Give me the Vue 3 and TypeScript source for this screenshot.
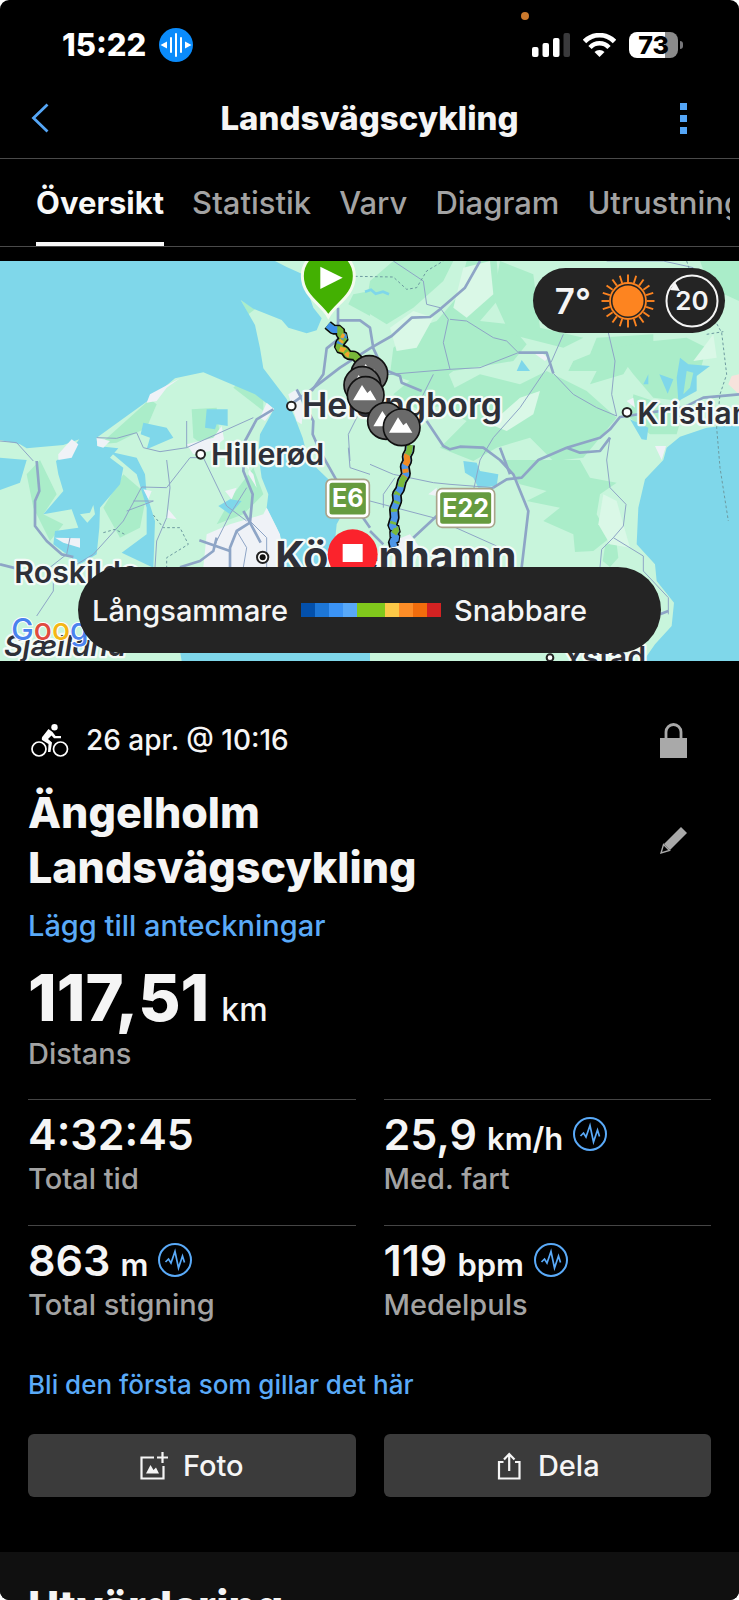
<script setup lang="ts">
import { ref } from 'vue'

interface Metric {
  value: string
  unit: string
  label: string
  chart: boolean
}

const tabs: string[] = ['Översikt', 'Statistik', 'Varv', 'Diagram', 'Utrustning']
const activeTab = ref<string>('Översikt')

const metrics: Metric[] = [
  { value: '4:32:45', unit: '', label: 'Total tid', chart: false },
  { value: '25,9', unit: 'km/h', label: 'Med. fart', chart: true },
  { value: '863', unit: 'm', label: 'Total stigning', chart: true },
  { value: '119', unit: 'bpm', label: 'Medelpuls', chart: true },
]

const climbs: [number, number][] = [
  [1108, 339],
  [1087, 372],
  [1097, 402],
  [1158, 480],
  [1205, 499],
]

const sunRays: number[] = Array.from({ length: 20 }, (_, i) => i * 18)
const northTrack = 'M983 192L1000 206L1020 206L1022 222L1034 228L1020 246L1016 262L1034 268L1044 282L1064 284L1078 298'
const southTrack = 'M1230 552L1228 570L1220 585L1222 600L1214 615L1218 640L1206 660L1200 685L1190 700L1192 720L1182 745L1184 770L1176 797L1190 805L1180 820L1190 832L1178 840L1182 857'
</script>

<template>
  <main class="screen">
    <div class="status">
      <span class="mic-dot"></span>
      <div class="status-left">
        <span class="clock">15:22</span>
        <svg class="voice" viewBox="0 0 34 34" aria-hidden="true">
          <circle cx="17" cy="17" r="17" fill="#0a8bfb" />
          <path d="M17 6V28M12 10V24M22 10V24" stroke="#fff" stroke-width="2" stroke-linecap="round" />
          <path d="M1.500 17L8 13.500V20.500ZM32.500 17L26 13.500V20.500Z" fill="#fff" />
        </svg>
      </div>
      <div class="status-right">
        <svg class="signal" viewBox="0 0 38 24" aria-hidden="true">
          <rect x="0" y="14" width="6.500" height="10" rx="2" fill="#fff" />
          <rect x="10.500" y="10" width="6.500" height="14" rx="2" fill="#fff" />
          <rect x="21" y="5" width="6.500" height="19" rx="2" fill="#fff" />
          <rect x="31.500" y="0" width="6.500" height="24" rx="2" fill="#3a3a3c" />
        </svg>
        <svg class="wifi" viewBox="0 0 33 24" aria-hidden="true">
          <path d="M1.500 8.500A21 21 0 0 1 31.500 8.500" fill="none" stroke="#fff" stroke-width="4.800" />
          <path d="M7 14.500A13 13 0 0 1 26 14.500" fill="none" stroke="#fff" stroke-width="4.500" />
          <path d="M11.500 19A7 7 0 0 1 21.500 19L16.500 24Z" fill="#fff" />
        </svg>
        <div class="battery"><span>73</span></div>
      </div>
    </div>

    <header class="nav">
      <button class="icon-button" type="button" aria-label="Tillbaka">
        <svg class="back" viewBox="0 0 18 30" aria-hidden="true">
          <path d="M16.500 1.500L2.500 15L16.500 28.500" fill="none" stroke="#55a6f6" stroke-width="2.800" />
        </svg>
      </button>
      <h1>Landsvägscykling</h1>
      <button class="icon-button end" type="button" aria-label="Mer">
        <svg class="more" viewBox="0 0 7 31" aria-hidden="true">
          <path d="M0 0H7V7H0ZM0 12H7V19H0ZM0 24H7V31H0Z" fill="#55a6f6" />
        </svg>
      </button>
    </header>

    <nav class="tabs">
      <div class="tab-strip">
        <button
          v-for="tab in tabs"
          :key="tab"
          type="button"
          class="tab"
          :class="{ active: tab === activeTab }"
          @click="activeTab = tab"
        >{{ tab }}</button>
      </div>
    </nav>

    <section class="map">
      <svg class="map-canvas" viewBox="0 0 2217 1200" preserveAspectRatio="xMidYMid slice" aria-hidden="true">
        <rect width="2217" height="1200" fill="#c8f5dc" />

        <g fill="#aaedc9">
          <path d="M1180 0L1110 60L1095 150L1160 190L1240 140L1330 60L1360 0Z" />
          <path d="M1250 200L1310 180L1370 110L1400 0L1490 0L1500 110L1440 180L1530 190L1580 250L1540 300L1360 330L1290 380L1170 340L1180 260Z" />
          <path d="M1500 0L1600 40L1620 200L1750 230L1690 260L1530 220L1480 110Z" />
          <path d="M1440 340L1560 370L1640 330L1760 390L1850 470L1750 590L1660 600L1590 530L1490 560L1420 600L1320 560L1400 480L1290 420Z" />
          <path d="M1790 230L1770 280L1720 300L1705 330L1790 330L1770 370L1870 340L1900 290L1960 280L1960 220Z" />
          <path d="M1840 260L1960 240L2060 230L2120 260L2100 330L2040 420L1960 410L1900 340Z" />
          <path d="M2100 0L2217 0L2217 120L2130 80Z" />
          <path d="M1900 400L2050 450L2030 520L1950 520L1890 470Z" />
          <path d="M1500 597L1740 597L1770 650L1850 665L1800 700L1790 760L1830 830L1780 870L1725 873L1720 820L1630 780L1680 740L1580 720L1640 690L1560 670Z" />
          <path d="M1816 850L1850 850L1855 890L1830 918L1808 900Z" />
          <path d="M1330 300L1380 420L1260 450L1180 400L1240 350Z" />
          <path d="M1060 100L1110 90L1110 165L1045 130Z" />
          <path d="M450 415L470 430L440 500L350 545L300 550Z" />
          <path d="M575 445L650 440L660 530L620 560L580 530Z" />
          <path d="M730 350L790 400L790 450L700 380Z" />
          <path d="M722 117L765 145L745 160Z" />
          <path d="M120 597L170 700L130 760L190 790L150 840L100 740L80 640Z" />
          <path d="M370 640L440 700L420 800L360 830L310 740Z" />
          <path d="M760 620L790 700L730 760L650 790L700 700Z" />
        </g>
        <g fill="#daf8e7">
          <path d="M1170 200L1240 150L1300 170L1250 260L1190 270Z" />
          <path d="M1390 20L1470 0L1480 100L1400 170L1360 140Z" />
          <path d="M1560 410L1620 390L1600 460L1520 510L1470 490Z" />
          <path d="M1610 60L1640 140L1720 200L1640 180Z" />
          <path d="M2080 300L2140 220L2150 290Z" />
          <path d="M1810 700L1850 720L1890 860L1830 850L1795 790Z" />
        </g>

        <g fill="#7fd7ea">
          <path d="M0 0H825L860 18L905 38L940 140L965 172L950 208L920 217L865 200L845 177L760 143L722 117L765 192L780 262L790 322L860 414L885 470L908 530L925 597L985 655L1035 745L1010 790L1005 840L1110 920V1200H545L540 1170L820 1000L850 850L830 800L800 740L805 700L785 650L775 580L780 520L822 444L765 400L700 372L610 334L525 352L450 415L290 530L292 555L355 562L330 590L370 620L360 670L300 740L298 800L290 880L240 910L160 850L165 810L235 800L215 745L130 760L190 690L175 640L168 600L215 565L238 535L190 552L80 562L60 550L0 537Z" />
          <path d="M330 572L410 590L435 640L440 700L465 780L460 920L365 875L440 820L440 740L410 640Z" />
          <path d="M430 485L500 500L520 530L440 565L450 530L422 520Z" />
          <path d="M620 445L683 445L683 495L650 490L645 505L615 500Z" />
          <path d="M0 590L80 597L60 665L0 687Z" />
          <path d="M655 735L690 715L725 720L690 760Z" />
          <path d="M2217 490L2120 500L2040 527L2000 560L1990 597L1935 655L1915 740L1910 850L1965 910L1970 960L2022 1025L2015 1095L1965 1150L1930 1200H2217Z" />
          <path d="M1550 330L1565 297L1590 330ZM1390 600L1430 605L1440 630L1495 640L1490 675L1435 680L1420 650L1395 635ZM1890 475L1945 500L1940 537L1925 535ZM1930 370L1945 340V370ZM1978 340L2020 355L2003 398ZM2040 290L2065 310L2130 315L2090 345L2090 390L2035 420L2030 350Z" />
          <path d="M2060 330L2080 335L2070 380L2050 400Z" fill="#aaedc9" />
        </g>
        <path d="M1095 92l18 -6l14 12l22 -6l18 8" fill="none" stroke="#7fd7ea" stroke-width="8" />

        <g fill="#c8f5dc">
          <path d="M240 760L270 755L280 732L285 760L262 785Z" />
        </g>
        <g fill="#eff2f7">
          <path d="M450 400L540 352L500 380L470 420L440 425Z" />
          <path d="M175 580L215 535L235 550L215 590L175 597Z" />
          <path d="M290 530L330 540L310 560L292 555Z" />
          <path d="M780 470L800 425L822 444L795 480Z" />
          <path d="M865 400L890 385L910 440L905 490L890 480Z" />
          <path d="M560 550L640 530L665 495L672 535L630 570L580 580Z" />
          <path d="M620 820L690 790L790 760L800 740L840 820L850 919H610Z" />
          <path d="M675 690L710 680L695 715ZM430 685L455 690L445 715ZM505 745L530 775L500 770ZM165 830L240 832L240 860L190 845Z" />
          <path d="M720 597L750 597L745 640L770 680L760 640Z" />
          <path d="M1180 840L1230 820L1260 860L1240 919H1175Z" />
          <path d="M1620 272L1645 290L1635 300L1600 275ZM1285 700L1310 680L1310 705ZM1965 555L1998 555L1985 597ZM1880 420L1900 410L1905 440Z" />
          <path d="M2195 345L2217 340V400L2185 370Z" fill="#f7e2dc" />
        </g>

        <g class="road major">
          <path d="M1440 0L1395 80L1320 145L1290 168L1235 170L1175 225L1110 262L1020 320L935 385L880 425" />
          <path d="M1014 140V235L980 262L970 340L935 390" />
          <path d="M1014 178L1080 178L1110 200L1120 262L1150 325L1200 345L1205 365L1265 390" />
          <path d="M890 385L940 480L938 520L960 570L1005 650L1110 800" />
          <path d="M820 445L770 475L735 540L730 630L758 700L750 785L710 810L690 860V919" />
          <path d="M730 750L750 785L782 845M598 838L690 870M650 830L640 870L600 900L540 919" />
          <path d="M110 600L118 690L105 720L105 795L140 840L185 880L220 888" />
          <path d="M1555 275H1640L1660 337" />
          <path d="M1280 480L1330 555L1350 565L1380 557L1450 560L1500 597L1540 640L1585 750L1565 919" />
          <path d="M1500 560L1530 640M1480 680L1520 655L1565 650L1615 597L1700 560L1800 530L1830 505L1860 468L2050 440L2110 410L2217 400" />
          <path d="M1480 680L1310 765L1240 830M1110 810L1150 850" />
          <path d="M1700 560L1740 575L1800 570L1830 530" />
          <path d="M0 910L60 925M1980 1060L2005 1050" />
        </g>
        <g class="road minor">
          <path d="M1180 0L1270 60L1280 130L1320 140L1345 175L1330 245L1350 325L1170 340L1110 338" />
          <path d="M1350 175L1400 180L1480 230L1520 240L1555 275L1440 320L1350 325" />
          <path d="M1660 337L1720 400L1790 440L1850 465M1690 220L1655 300L1560 440L1480 530L1440 597" />
          <path d="M1825 215L1845 300L1835 400L1850 465M1830 530L1820 597L1830 680L1878 730L1870 795L1840 830L1805 865L1800 919" />
          <path d="M1840 830L1930 885L1930 930L2005 1010L2005 1060" />
          <path d="M0 540L50 545L100 600M290 530L350 532L410 515L430 560L480 572L560 560L760 470M560 480V560M500 597L510 680L500 770L470 840L465 919M425 678L500 680L570 590L610 590L680 735L740 780" />
          <path d="M425 678L370 780L280 880L230 910M160 919V990L110 1065M210 830L200 880L150 919M380 750L460 720L400 720" />
          <path d="M740 680L690 760L640 860M710 810L740 860L730 919M750 780L800 830L800 919M1045 560L1050 620L1110 640M1110 610L1180 640L1300 665L1350 670L1480 680M1110 720L1300 770L1490 855M1050 600L1045 520L1080 450L1180 430M1300 340L1260 420" />
          <path d="M1185 650L1150 700V740M1440 597L1420 690M820 990L1000 1000M1820 0L1990 0L2080 20" />
        </g>
        <g class="road ferry">
          <path d="M1065 46L1180 48L1220 85L1250 80L1280 30L1330 0M2060 0L2080 60L2165 215L2180 340L2160 400L2150 500L2160 620L2185 780M2120 220L2170 212" />
          <path d="M310 815L345 805L378 822M460 762L490 800L540 800L565 850L500 890V919" />
        </g>

        <g class="place-dots">
          <circle cx="874" cy="435" r="13" />
          <circle cx="602" cy="580" r="13" />
          <circle cx="1881" cy="454" r="13" />
          <circle cx="1650" cy="1190" r="10" />
          <circle cx="788" cy="889" r="17" />
        </g>
        <circle cx="788" cy="889" r="9" fill="#111" />

        <g class="places">
          <text x="906" y="469" class="city">Helsingborg</text>
          <text x="633" y="612" class="town">Hillerød</text>
          <text x="1912" y="489" class="town">Kristianstad</text>
          <text x="43" y="967" class="town">Roskilde</text>
          <text x="826" y="930" class="capital">Köpenhamn</text>
          <text x="1688" y="1222" class="town">Ystad</text>
          <text x="12" y="1184" class="region">Sjælland</text>
        </g>
        <text x="34" y="1137" class="google"><tspan fill="#4a83ee">G</tspan><tspan fill="#df4c3f">o</tspan><tspan fill="#f4b715">o</tspan><tspan fill="#4a83ee">g</tspan><tspan fill="#3fa757">l</tspan><tspan fill="#df4c3f">e</tspan></text>

        <g class="shield">
          <rect x="978" y="655" width="130" height="116" rx="16" class="shield-edge" />
          <rect x="986" y="663" width="114" height="100" rx="10" />
          <text x="1043" y="738">E6</text>
          <rect x="1310" y="683" width="174" height="116" rx="16" class="shield-edge" />
          <rect x="1318" y="691" width="158" height="100" rx="10" />
          <text x="1397" y="767">E22</text>
        </g>

        <g fill="none" stroke-linejoin="bevel">
          <path :d="northTrack" stroke="#0b0b0b" stroke-width="30" />
          <path :d="southTrack" stroke="#0b0b0b" stroke-width="30" />
          <path :d="northTrack" stroke="#79b83a" stroke-width="20" />
          <path :d="southTrack" stroke="#4d96e6" stroke-width="20" />
          <path :d="northTrack" stroke="#3f8fe8" stroke-width="20" stroke-dasharray="34 30 8 20 6 300" />
          <path :d="northTrack" stroke="#f2a52e" stroke-width="14" stroke-dasharray="0 60 10 14 8 22 16 8 12 300" />
          <path :d="southTrack" stroke="#f08a22" stroke-width="18" stroke-dasharray="0 30 34 12 12 10 8 300" />
          <path :d="southTrack" stroke="#7ab93a" stroke-width="18" stroke-dasharray="30 70 34 18 8 20 8 18 8 30 8 20 20 300" />
        </g>

        <path d="M985 167C965 130 907 105 907 45A78 78 0 0 1 1063 45C1063 105 1005 130 985 167Z" fill="#43b002" stroke="#f4fbef" stroke-width="9" />
        <path d="M961 17L1028 50L961 84Z" fill="#fff" />

        <g v-for="[cx, cy] in climbs" :key="cx">
          <circle :cx="cx" :cy="cy" r="55" fill="#6a6a6a" stroke="#111" stroke-width="5" />
          <path :d="`M${cx - 38} ${cy + 16}L${cx - 11} ${cy - 30}L${cx + 5} ${cy - 6}L${cx + 14} ${cy - 14}L${cx + 32} ${cy + 16}Z`" fill="#fff" />
        </g>

        <circle cx="1058" cy="880" r="75" fill="#fb232c" />
        <rect x="1028" y="849" width="60" height="54" fill="#fff" />
      </svg>

      <div class="weather">
        <span class="temp">7°</span>
        <svg class="sun" viewBox="0 0 54 54" aria-hidden="true">
          <circle cx="27" cy="27" r="15.500" fill="#fd8420" />
          <circle cx="27" cy="27" r="18" fill="none" stroke="#fd8420" stroke-width="1.800" />
          <path
            v-for="angle in sunRays"
            :key="angle"
            d="M27 8V0.500"
            :transform="`rotate(${angle} 27 27)`"
            stroke="#fd8420"
            stroke-width="1.900"
          />
        </svg>
        <div class="wind">
          <svg viewBox="0 0 54 54" aria-hidden="true">
            <circle cx="27" cy="27" r="25.500" fill="none" stroke="#f5f5f5" stroke-width="2" />
            <path d="M5 16L10 8L15 17Z" fill="#f5f5f5" />
          </svg>
          <span>20</span>
        </div>
      </div>

      <div class="legend">
        <span>Långsammare</span>
        <span class="scale"><i class="c1"></i><i class="c2"></i><i class="c3"></i><i class="c4"></i><i class="c5"></i><i class="c5"></i><i class="c6"></i><i class="c7"></i><i class="c8"></i><i class="c9"></i></span>
        <span>Snabbare</span>
      </div>
    </section>

    <section class="activity">
      <div class="meta">
        <svg class="bike" viewBox="0 0 38 33" aria-hidden="true">
          <g fill="none" stroke="#fff" stroke-width="1.700">
            <circle cx="8" cy="25" r="7" />
            <circle cx="29.500" cy="25" r="7" />
          </g>
          <circle cx="23.500" cy="3.200" r="3.200" fill="#fff" />
          <path d="M17.500 5L21.500 8L24.500 12H30V14.200H23L20.500 11.500L17 15L21 18.500L19.500 28H17L17.500 20L11 16C10.500 14.500 11 13 12 12Z" fill="#fff" />
        </svg>
        <time>26 apr. @ 10:16</time>
        <button class="icon-button end" type="button" aria-label="Sekretess">
          <svg class="lock" viewBox="0 0 27 35" aria-hidden="true">
            <path d="M0 15H27V35H0Z" fill="#a9a9a9" />
            <path d="M6 16V9A7.500 7.500 0 0 1 21 9V16" fill="none" stroke="#a9a9a9" stroke-width="2.800" />
          </svg>
        </button>
      </div>

      <div class="title-row">
        <h2>Ängelholm Landsvägscykling</h2>
        <button class="icon-button end" type="button" aria-label="Redigera">
          <svg class="pencil" viewBox="0 0 27 27" aria-hidden="true">
            <path d="M21 0L27 6L10 23L4 17Z" fill="#a9a9a9" />
            <path d="M3.500 17.500L9.500 23.500L1 26Z" fill="none" stroke="#a9a9a9" stroke-width="1.400" />
          </svg>
        </button>
      </div>

      <a class="notes" href="#anteckningar">Lägg till anteckningar</a>

      <div class="distance"><strong>117,51</strong><span>km</span></div>
      <div class="label">Distans</div>

      <div class="metrics">
        <div v-for="m in metrics" :key="m.label" class="metric">
          <div class="value">
            <span>{{ m.value }}</span>
            <span v-if="m.unit" class="unit">{{ m.unit }}</span>
            <svg v-if="m.chart" class="pulse" viewBox="0 0 34 34" aria-hidden="true">
              <circle cx="17" cy="17" r="16" fill="none" stroke="#5aaaf8" stroke-width="2" />
              <path d="M7.500 19L10.500 16L13 20L17 8.500L20.500 25L24.500 13L26.500 19.500" fill="none" stroke="#5aaaf8" stroke-width="1.700" />
            </svg>
          </div>
          <div class="label">{{ m.label }}</div>
        </div>
      </div>

      <a class="like" href="#gilla">Bli den första som gillar det här</a>

      <div class="actions">
        <button type="button" class="action">
          <svg viewBox="0 0 28 28" aria-hidden="true">
            <g fill="none" stroke="#f5f5f5" stroke-width="2.200">
              <path d="M14 5.500H1.500V26.500H23.500V14M22.500 0V11M17 5.500H28" />
            </g>
            <path d="M6 21.500L10.500 13L13.500 18L16 15.500L19 21.500Z" fill="#f5f5f5" />
          </svg>
          Foto
        </button>
        <button type="button" class="action">
          <svg viewBox="0 0 28 28" aria-hidden="true">
            <path d="M8.500 10H4V26.500H24.500V10H20M14.200 19V2.500M9 7.500L14.200 2L19.500 7.500" fill="none" stroke="#f5f5f5" stroke-width="2.200" />
          </svg>
          Dela
        </button>
      </div>
    </section>

    <section class="evaluation">
      <h2>Utvärdering</h2>
    </section>
  </main>
</template>

<style>
body {
  margin: 0;
  background: #fff;
}
</style>

<style scoped>
.screen {
  height: 100vh;
  overflow: hidden;
  border-radius: 9px;
  background: #000;
  color: #f5f5f5;
  font-family: Inter, "Liberation Sans", sans-serif;
  font-size: 29px;
  font-weight: 500;
  display: flex;
  flex-direction: column;
}

.screen > * {
  flex-shrink: 0;
}

button {
  font: inherit;
  color: inherit;
  background: none;
  border: 0;
  padding: 0;
  cursor: pointer;
}

svg {
  display: block;
}

a {
  color: #5aaaf8;
  text-decoration: none;
}

h1,
h2 {
  margin: 0;
}

.status {
  position: relative;
  box-sizing: border-box;
  height: 80px;
  padding: 9px 61px 0 62px;
  display: flex;
  align-items: center;
  justify-content: space-between;
}

.mic-dot {
  position: absolute;
  top: 12px;
  left: 71%;
  width: 8px;
  height: 8px;
  margin-left: -4px;
  border-radius: 50%;
  background: #cc7a2d;
}

.status-left,
.status-right {
  display: flex;
  align-items: center;
  gap: 13px;
}

.clock {
  font-size: 31px;
  font-weight: 800;
  color: #fff;
}

.voice {
  width: 34px;
  height: 34px;
}

.signal {
  width: 38px;
  height: 24px;
}

.wifi {
  width: 33px;
  height: 24px;
}

.battery {
  position: relative;
  width: 49px;
  height: 26px;
  border-radius: 8px;
  background: linear-gradient(90deg, #fff 73%, #8b8b8b 73%);
  color: #000;
  font-size: 25px;
  font-weight: 800;
  line-height: 26px;
  text-align: center;
}

.battery::after {
  content: "";
  position: absolute;
  right: -5px;
  top: 9px;
  width: 3px;
  height: 8px;
  border-radius: 0 3px 3px 0;
  background: #77777a;
}

.nav {
  box-sizing: border-box;
  height: 79px;
  padding: 0 52px 2px 31px;
  border-bottom: 1px solid #4a4a4a;
  display: grid;
  grid-template-columns: 1fr auto 1fr;
  align-items: center;
}

.nav h1 {
  margin-left: 21px;
  font-size: 33px;
  font-weight: 800;
}

.icon-button {
  display: flex;
}

.end {
  justify-content: flex-end;
  margin-left: auto;
}

.back {
  width: 18px;
  height: 30px;
}

.more {
  width: 7px;
  height: 31px;
}

.tabs {
  border-bottom: 1px solid #4a4a4a;
  margin-bottom: 14px;
  padding: 0 9px 0 36px;
}

.tab-strip {
  display: flex;
  gap: 28px;
  overflow: hidden;
}

.tab {
  flex: none;
  box-sizing: border-box;
  height: 87px;
  padding-top: 4px;
  border-bottom: 4px solid transparent;
  color: #a3a3a3;
  font-size: 31px;
}

.tab.active {
  color: #f8f8f8;
  font-weight: 700;
  border-bottom-color: #f8f8f8;
}

.map {
  position: relative;
  height: 400px;
  overflow: hidden;
}

.map-canvas {
  width: 100%;
  height: 100%;
}

.road {
  fill: none;
  stroke: #8ea5c6;
  stroke-linejoin: round;
}

.major {
  stroke-width: 8px;
}

.minor {
  stroke-width: 3px;
}

.ferry {
  stroke: #6d9aa0;
  stroke-width: 3px;
  stroke-dasharray: 8 7;
}

.place-dots {
  fill: #fff;
  stroke: #222;
  stroke-width: 6px;
}

.places {
  fill: #2e3038;
  stroke: #f4fbf8;
  stroke-width: 14px;
  stroke-linejoin: round;
  paint-order: stroke;
  font-weight: 600;
}

.town {
  font-size: 91px;
}

.city {
  font-size: 102px;
}

.capital {
  font-size: 123px;
  font-weight: 700;
}

.region {
  font-size: 87px;
  font-style: italic;
}

.google {
  font-size: 90px;
  stroke: #fff;
  stroke-width: 6px;
  paint-order: stroke;
}

.shield {
  fill: #669b3f;
  stroke: #fff;
  stroke-width: 5px;
}

.shield-edge {
  stroke: #a9a48b;
  fill: #fff;
}

.shield text {
  fill: #fff;
  stroke: none;
  font-size: 75px;
  font-weight: 700;
  text-anchor: middle;
}

.weather {
  position: absolute;
  top: 7px;
  right: 14px;
  box-sizing: border-box;
  height: 65px;
  padding: 0 6px 0 22px;
  border-radius: 33px;
  background: #242424;
  display: flex;
  align-items: center;
  gap: 10px;
  font-weight: 600;
}

.temp {
  font-size: 35px;
}

.sun {
  width: 54px;
  height: 54px;
}

.wind {
  display: grid;
  place-items: center;
  font-size: 26px;
}

.wind > * {
  grid-area: 1 / 1;
}

.wind svg {
  width: 54px;
  height: 54px;
}

.legend {
  position: absolute;
  left: 78px;
  right: 78px;
  bottom: 8px;
  box-sizing: border-box;
  height: 86px;
  padding: 0 14px;
  border-radius: 43px;
  background: #242424;
  display: flex;
  align-items: center;
  gap: 13px;
}

.scale {
  display: flex;
}

.scale i {
  width: 14px;
  height: 14px;
}

.c1 { background: #0350ab; }
.c2 { background: #1d76d6; }
.c3 { background: #3b93f5; }
.c4 { background: #58a8f8; }
.c5 { background: #80c81c; }
.c6 { background: #fbc847; }
.c7 { background: #fd8d27; }
.c8 { background: #f16c0c; }
.c9 { background: #d32222; }

.activity {
  padding: 55px 28px;
  display: flex;
  flex-direction: column;
}

.meta {
  display: flex;
  align-items: center;
  height: 48px;
  padding: 0 24px 0 3px;
  font-size: 28px;
}

.bike {
  width: 38px;
  height: 33px;
  margin-right: 17px;
}

.lock {
  width: 27px;
  height: 35px;
}

.title-row {
  display: flex;
  align-items: center;
  margin-top: 21px;
  padding-right: 24px;
}

.title-row h2 {
  max-width: 440px;
  font-size: 43px;
  font-weight: 800;
  line-height: 55px;
}

.pencil {
  width: 27px;
  height: 27px;
}

.notes {
  margin-top: 13px;
  line-height: 36px;
}

.distance {
  display: flex;
  align-items: baseline;
  gap: 12px;
  height: 64px;
  margin-top: 22px;
  line-height: 64px;
}

.distance strong {
  font-size: 65px;
  font-weight: 800;
}

.distance span {
  font-size: 32px;
}

.label {
  color: #a3a3a3;
  line-height: 36px;
}

.distance + .label {
  margin-top: 6px;
}

.metrics {
  display: grid;
  grid-template-columns: 1fr 1fr;
  column-gap: 28px;
  margin-top: 27px;
}

.metric {
  border-top: 1px solid #454545;
  padding: 10px 0 28px;
}

.value {
  display: flex;
  align-items: baseline;
  gap: 10px;
  height: 48px;
  margin-bottom: 3px;
  font-size: 43px;
  font-weight: 600;
  line-height: 48px;
}

.unit {
  font-size: 31px;
}

.pulse {
  align-self: center;
  width: 34px;
  height: 34px;
}

.like {
  margin-top: 16px;
  font-size: 26px;
  line-height: 36px;
}

.actions {
  display: grid;
  grid-template-columns: 1fr 1fr;
  gap: 28px;
  margin-top: 31px;
}

.action {
  height: 63px;
  border-radius: 6px;
  background: #3b3b3b;
  display: flex;
  align-items: center;
  justify-content: center;
  gap: 15px;
}

.action svg {
  width: 28px;
  height: 28px;
}

.evaluation {
  flex-grow: 1;
  padding: 32px 28px;
  background: #101010;
}

.evaluation h2 {
  font-size: 43px;
  font-weight: 800;
  line-height: 44px;
}
</style>
